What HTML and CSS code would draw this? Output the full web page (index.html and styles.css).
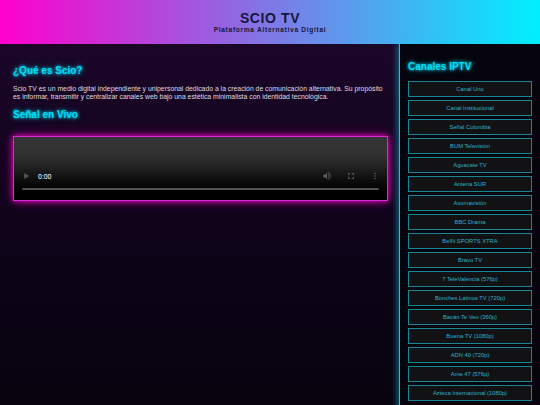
FILE: index.html
```html
<!DOCTYPE html>
<html lang="es">
<head>
<meta charset="utf-8">
<title>SCIO TV</title>
<link rel="stylesheet" href="styles.css">
</head>
<body>
<header class="top">
  <h1 class="brand">SCIO TV</h1>
  <p class="tagline">Plataforma Alternativa Digital</p>
</header>
<div class="layout">
  <main class="content">
    <h2 class="glow-title">¿Qué es Scio?</h2>
    <p class="about">Scio TV es un medio digital independiente y unipersonal dedicado a la creación de comunicación alternativa. Su propósito es informar, transmitir y centralizar canales web bajo una estética minimalista con identidad tecnológica.</p>
    <h2 class="glow-title">Señal en Vivo</h2>
    <div class="player-frame">
      <video class="player" controls></video>
    </div>
  </main>
  <aside class="sidebar">
    <h2 class="glow-title side-title">Canales IPTV</h2>
    <ul class="channels">
      <li><button class="channel">Canal Uno</button></li>
      <li><button class="channel">Canal Institucional</button></li>
      <li><button class="channel">Señal Colombia</button></li>
      <li><button class="channel">BUM Televisión</button></li>
      <li><button class="channel">Aguacate TV</button></li>
      <li><button class="channel">Antena SUR</button></li>
      <li><button class="channel">Axomavisión</button></li>
      <li><button class="channel">BBC Drama</button></li>
      <li><button class="channel">BeIN SPORTS XTRA</button></li>
      <li><button class="channel">Bravo TV</button></li>
      <li><button class="channel">7 TeleValencia (576p)</button></li>
      <li><button class="channel">Bonches Latinos TV (720p)</button></li>
      <li><button class="channel">Bacán Te Veo (360p)</button></li>
      <li><button class="channel">Buena TV (1080p)</button></li>
      <li><button class="channel">ADN 40 (720p)</button></li>
      <li><button class="channel">Ame 47 (576p)</button></li>
      <li><button class="channel">Azteca Internacional (1080p)</button></li>
    </ul>
  </aside>
</div>
</body>
</html>
```

FILE: styles.css
```css
* { box-sizing: border-box; }

html, body {
  margin: 0;
  padding: 0;
  background: #06040c;
  font-family: "Liberation Sans", Arial, sans-serif;
}

.top {
  height: 44px;
  background: linear-gradient(90deg, #ff00cc 0%, #00f0ff 100%);
  display: flex;
  flex-direction: column;
  align-items: center;
  justify-content: center;
  padding-top: 1px;
  color: #16163a;
}

.brand {
  margin: 0;
  font-size: 14px;
  line-height: 15px;
  font-weight: 700;
  letter-spacing: 0.6px;
}

.tagline {
  margin: 0;
  font-size: 6.6px;
  line-height: 8px;
  font-weight: 700;
  letter-spacing: 0.7px;
}

.layout {
  display: grid;
  grid-template-columns: 1fr 141px;
  min-height: calc(100vh - 44px);
}

.content {
  background: linear-gradient(180deg, #1b0628 0%, #10041b 45%, #07030e 100%);
  padding: 21px 11px 20px 13px;
  display: flex;
  flex-direction: column;
}

.glow-title {
  margin: 0;
  font-size: 10px;
  line-height: 12px;
  font-weight: 700;
  color: #00dcf2;
  text-shadow: 0 0 3px #00e5ff, 0 0 6px rgba(0, 229, 255, 0.6);
}

.about {
  margin: 8px 0 8px;
  font-size: 6.85px;
  line-height: 8px;
  color: #dcdce4;
}

.player-frame {
  margin-top: 15px;
  width: 100%;
  height: 65px;
  overflow: hidden;
  background: #000;
  border: 1px solid #d62ad6;
  box-shadow: 0 0 6px #ff00cc, 0 0 12px rgba(255, 0, 204, 0.35);
}

.player {
  display: block;
  width: 200%;
  height: 126px;
  background: #333;
  transform: scale(0.5);
  transform-origin: 0 0;
}

.sidebar {
  background: #06040c;
  border-left: 1px solid #18c8e0;
  box-shadow: -2px 0 6px rgba(0, 220, 255, 0.45);
  padding: 17px 8px 8px 8px;
}

.side-title {
  margin-bottom: 8px;
}

.channels {
  list-style: none;
  margin: 0;
  padding: 0;
  display: flex;
  flex-direction: column;
  gap: 3px;
}

.channel {
  display: block;
  width: 100%;
  height: 16px;
  margin: 0;
  padding: 0;
  background: #121214;
  border: 1px solid #178796;
  color: #2db3c6;
  font-family: "Liberation Sans", Arial, sans-serif;
  font-size: 5.8px;
  line-height: 14px;
  text-align: center;
}
```
